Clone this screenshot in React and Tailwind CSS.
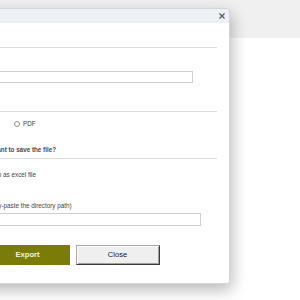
import React from 'react';

function Radio({ checked }) {
    return (
        <span className="inline-block w-[6px] h-[6px] rounded-full border border-[#8a8a8a] bg-white shrink-0 relative">
            {checked && <span className="absolute inset-[1px] rounded-full bg-[#333]" />}
        </span>
    );
}

function Heading({ children, className = '' }) {
    return (
        <div className={`h-[14px] pb-[3px] border-b border-[#dedede] text-[6.3px] leading-[10px] font-bold text-[#4a4a4a] whitespace-nowrap ${className}`}>
            {children}
        </div>
    );
}

export default function App() {
    return (
        <div className="relative w-[300px] h-[300px] overflow-hidden bg-white font-['Liberation_Sans',Arial,sans-serif]">
            <div className="h-[38px] bg-[#f0f0f0]" />

            <div className="absolute left-[-64px] top-[8px] w-[294px] bg-white border border-[#d6d6d6] rounded-[3px] shadow-[2px_6px_16px_rgba(0,0,0,0.28)]">
                <div className="h-[14px] bg-[#edf1f6] rounded-t-[3px] flex items-center justify-between pl-[12px] pr-[4px]">
                    <span className="text-[6.5px] font-bold text-[#444]">Export</span>
                    <svg width="6" height="6" viewBox="0 0 6 6" className="text-[#555]">
                        <path d="M0.5 0.5 L5.5 5.5 M5.5 0.5 L0.5 5.5" stroke="currentColor" strokeWidth="1.2" />
                    </svg>
                </div>

                <div className="px-[12px] pt-[11px] pb-[18px] text-[6.3px] leading-[10px] text-[#444]">
                    <Heading>Export options</Heading>

                    <div className="mt-[8px] h-[10px]">File name</div>
                    <input
                        type="text"
                        className="block mt-[5px] w-[244px] h-[12px] border border-[#cfcfcf] bg-white outline-none"
                    />

                    <Heading className="mt-[15px]">Select format</Heading>

                    <div className="mt-[7px] h-[10px] flex items-center">
                        <div className="w-[65px] flex items-center gap-[3px]">
                            <Radio checked />
                            <span>Excel</span>
                        </div>
                        <div className="flex items-center gap-[3px]">
                            <Radio />
                            <span>PDF</span>
                        </div>
                    </div>

                    <Heading className="mt-[16px]">Where do you want to save the file?</Heading>

                    <div className="mt-[11px] h-[10px] flex items-center gap-[4px] whitespace-nowrap">
                        <Radio checked />
                        <span>Save and open as excel file</span>
                    </div>

                    <div className="mt-[21px] h-[10px] whitespace-nowrap">Save to path (copy-paste the directory path)</div>
                    <input
                        type="text"
                        className="block mt-[2px] w-[252px] h-[13px] border border-[#cfcfcf] bg-white outline-none"
                    />

                    <div className="mt-[19px] flex justify-center gap-[6px] pr-[21px]">
                        <button className="w-[84px] h-[20px] bg-[#7b7b08] text-[7.6px] font-bold text-[#f4f4dc]">
                            Export
                        </button>
                        <button className="w-[84px] h-[20px] bg-[#efefef] border border-t-[#a8a8a8] border-l-[#a8a8a8] border-b-[#3c3c3c] border-r-[#3c3c3c] shadow-[inset_1px_1px_0_#ffffff,inset_-1px_-1px_0_#a0a0a0] text-[7.6px] text-[#222]">
                            Close
                        </button>
                    </div>
                </div>
            </div>
        </div>
    );
}
